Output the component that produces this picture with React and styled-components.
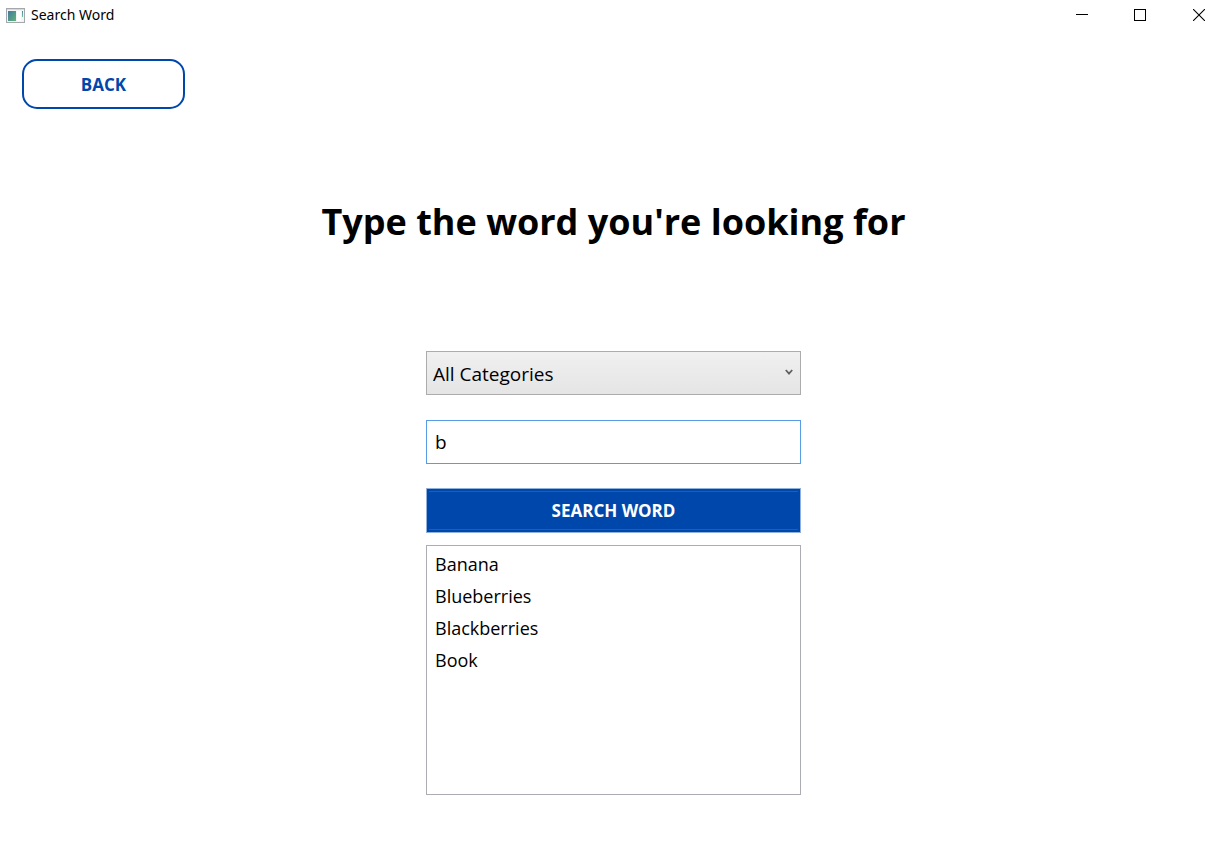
import React, { useState } from "react";
import styled, { createGlobalStyle } from "styled-components";

const GlobalStyle = createGlobalStyle`
  *, *::before, *::after { box-sizing: border-box; }
  body {
    margin: 0;
    background: #ffffff;
    color: #000000;
    font-family: "Segoe UI", "Open Sans", "Noto Sans", sans-serif;
  }
  button, input, select { font: inherit; color: inherit; margin: 0; }
`;

const BLUE = "#0047ab";

const Window = styled.div`
  display: flex;
  flex-direction: column;
  min-height: 100vh;
`;

const TitleBar = styled.header`
  display: flex;
  align-items: center;
  height: 30px;
  padding-left: 6px;
`;

const AppIcon = styled.svg`
  display: block;
  margin-right: 6px;
`;

const WindowTitle = styled.span`
  flex: 1;
  font-family: "Segoe UI", "Noto Sans", sans-serif;
  font-size: 14px;
  line-height: 32px;
`;

const CaptionButton = styled.button`
  display: flex;
  align-items: center;
  justify-content: center;
  width: ${(p) => (p.$wide ? 60 : 58)}px;
  height: 30px;
  margin-right: ${(p) => (p.$last ? -7 : 0)}px;
  padding: 0;
  border: 0;
  background: transparent;
`;

const CaptionButtons = styled.div`
  display: flex;
  overflow: hidden;
`;

const Content = styled.main`
  display: flex;
  flex-direction: column;
  padding: 29px 17px 62px 22px;
`;

const BackButton = styled.button`
  align-self: flex-start;
  width: 163px;
  height: 50px;
  padding: 0;
  border: 2px solid ${BLUE};
  border-radius: 15px;
  background: #ffffff;
  color: ${BLUE};
  font-size: 17px;
  font-weight: 700;
`;

const Heading = styled.h1`
  margin: 86px 0 103px;
  font-size: 36px;
  font-weight: 700;
  line-height: 53px;
  text-align: center;
`;

const SearchForm = styled.form`
  display: flex;
  flex-direction: column;
  align-self: center;
  width: 375px;
  max-width: 100%;
  font-size: 19px;
`;

const SelectField = styled.div`
  display: grid;
  align-items: center;
  margin-bottom: 25px;

  & > * { grid-area: 1 / 1; }
`;

const CategorySelect = styled.select`
  width: 100%;
  height: 44px;
  padding: 2px 28px 0 6px;
  border: 1px solid #acacac;
  border-radius: 0;
  outline: none;
  appearance: none;
  background: linear-gradient(#f0f0f0, #e5e5e5);
`;

const Chevron = styled.svg`
  justify-self: end;
  margin: 0 8px 2px 0;
  pointer-events: none;
`;

const WordInput = styled.input`
  height: 44px;
  margin-bottom: 24px;
  padding: 0 8px;
  border: 1px solid #569de5;
  border-radius: 0;
  outline: none;
  background: #ffffff;
`;

const SearchButton = styled.button`
  display: flex;
  height: 45px;
  margin-bottom: 12px;
  padding: 2px;
  border: 1px solid #8fb0dc;
  background: ${BLUE};
  color: #ffffff;
  font-size: 17px;
  font-weight: 700;
`;

const SearchButtonFace = styled.span`
  display: flex;
  flex: 1;
  align-self: stretch;
  align-items: center;
  justify-content: center;
  border: solid #1f5eb6;
  border-width: 1px 0;
`;

const Results = styled.ul`
  height: 250px;
  margin: 0;
  padding: 2px 8px;
  border: 1px solid #abadb3;
  font-size: 18px;
  list-style: none;
  overflow: auto;
`;

const Result = styled.li`
  line-height: 32px;
`;

const words = ["Banana", "Blueberries", "Blackberries", "Book"];

export default function App() {
  const [query, setQuery] = useState("b");

  return (
    <>
      <GlobalStyle />
      <Window>
        <TitleBar>
          <AppIcon width="19" height="15" viewBox="0 0 19 15" aria-hidden="true">
            <defs>
              <linearGradient id="pane" x1="0" y1="0" x2="1" y2="1">
                <stop offset="0" stopColor="#4577a0" />
                <stop offset="1" stopColor="#5fb577" />
              </linearGradient>
              <linearGradient id="bar" x1="0" y1="0" x2="0" y2="1">
                <stop offset="0" stopColor="#4b82ba" />
                <stop offset="1" stopColor="#72c48b" />
              </linearGradient>
            </defs>
            <rect x="0.5" y="0.5" width="18" height="14" fill="#f4f4f5" stroke="#a3a8ad" />
            <rect x="1" y="1" width="17" height="1" fill="#d5d9dd" />
            <rect x="2" y="3" width="8" height="10" fill="url(#pane)" />
            <rect x="11" y="3" width="4" height="10" fill="#ffffff" />
            <rect x="16" y="3" width="1" height="6" fill="url(#bar)" />
          </AppIcon>
          <WindowTitle>Search Word</WindowTitle>
          <CaptionButtons>
            <CaptionButton type="button" aria-label="Minimize">
              <svg width="12" height="12" shapeRendering="crispEdges">
                <path d="M0 5.5H12" stroke="#000" />
              </svg>
            </CaptionButton>
            <CaptionButton type="button" aria-label="Maximize">
              <svg width="12" height="12" shapeRendering="crispEdges">
                <rect x="0.5" y="0.5" width="11" height="11" fill="none" stroke="#000" />
              </svg>
            </CaptionButton>
            <CaptionButton type="button" aria-label="Close" $wide $last>
              <svg width="12" height="12">
                <path d="M0 0L12 12M12 0L0 12" stroke="#000" strokeWidth="1.1" />
              </svg>
            </CaptionButton>
          </CaptionButtons>
        </TitleBar>
        <Content>
          <BackButton type="button">BACK</BackButton>
          <Heading>Type the word you're looking for</Heading>
          <SearchForm onSubmit={(e) => e.preventDefault()}>
            <SelectField>
              <CategorySelect aria-label="Category">
                <option>All Categories</option>
              </CategorySelect>
              <Chevron width="8" height="7" viewBox="0 0 8 7" aria-hidden="true">
                <path d="M0.8 1L4 4.6L7.2 1" fill="none" stroke="#606060" strokeWidth="1.8" />
              </Chevron>
            </SelectField>
            <WordInput
              type="text"
              aria-label="Word"
              value={query}
              onChange={(e) => setQuery(e.target.value)}
            />
            <SearchButton type="submit">
              <SearchButtonFace>SEARCH WORD</SearchButtonFace>
            </SearchButton>
            <Results aria-label="Matching words">
              {words.map((word) => (
                <Result key={word}>{word}</Result>
              ))}
            </Results>
          </SearchForm>
        </Content>
      </Window>
    </>
  );
}
